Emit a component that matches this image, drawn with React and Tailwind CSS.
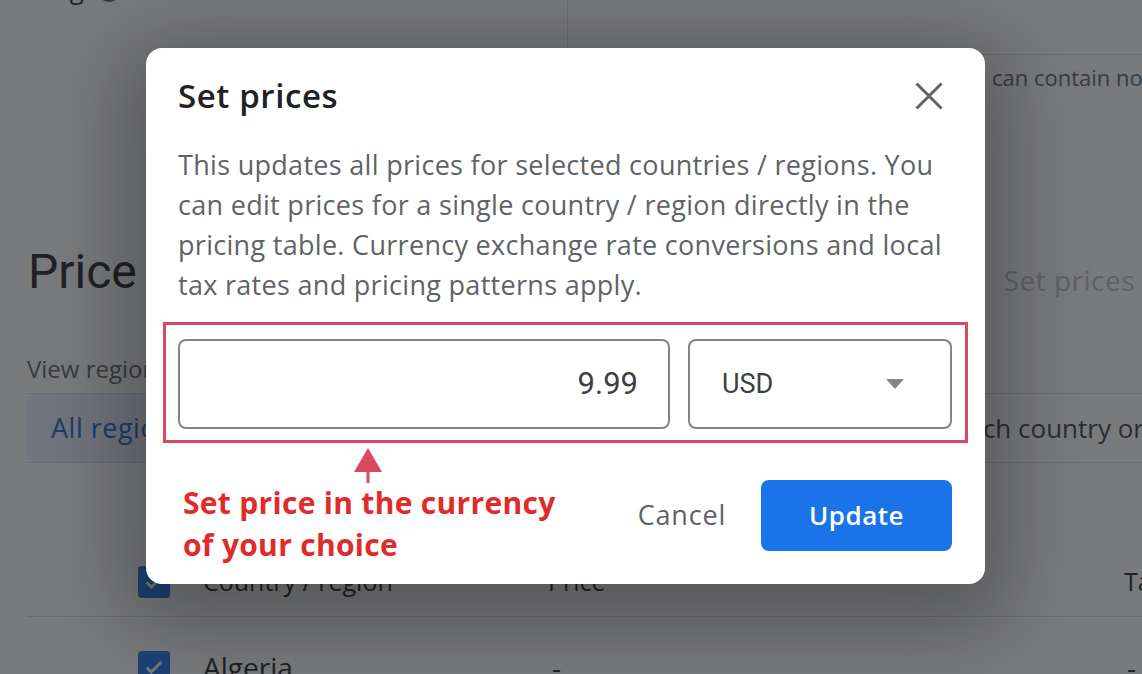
import { Info } from 'lucide-react'

function CheckBox() {
  return (
    <div className="shrink-0 w-[32px] h-[32px] rounded-[4px] bg-[#1a73e8] flex items-center justify-center">
      <svg width="22" height="22" viewBox="0 0 24 24" fill="none">
        <path d="M4 12.5l5 5L20 6.5" stroke="#ffffff" strokeWidth="3" />
      </svg>
    </div>
  )
}

function PricingPage() {
  return (
    <div className="text-[#202124]">
      <div className="flex">
        <div className="shrink-0 w-[568px] h-[120px] border-r border-[#dadce0] pl-[2px]">
          <div className="-mt-[30px] flex items-center gap-3 text-[26px] text-[#202124]">
            Pricing
            <Info className="w-[26px] h-[26px] text-[#5f6368]" />
          </div>
        </div>
        <div className="flex-1 min-w-0">
          <div className="h-[55px] border-b border-[#dadce0]" />
          <p className="pl-[424px] pt-[8px] text-[22px] leading-[28px] text-[#5f6368] whitespace-nowrap">
            can contain no more than two decimals
          </p>
        </div>
      </div>

      <div className="mt-[124px] h-[56px] flex items-start justify-between pl-[28px] pr-[7px]">
        <h1 className="font-['Roboto',sans-serif] text-[48px] leading-[56px] font-normal">Price</h1>
        <span className="mt-[16px] text-[28px] leading-[40px] tracking-[0.5px] text-[#bdc1c6]">Set prices</span>
      </div>

      <p className="mt-[55px] pl-[27px] text-[24px] leading-[28px] text-[#5f6368] whitespace-nowrap">
        View regions
      </p>

      <div className="mt-[10px] ml-[27px] h-[70px] flex border-y border-[#dadce0]">
        <div className="shrink-0 w-[420px] bg-[#e8f0fe] rounded-l-[8px] flex items-center pl-[24px] text-[27px] tracking-[0.5px] font-medium text-[#1967d2]">
          All regions
        </div>
        <div className="shrink-0 flex items-center pl-[507px] text-[26px] font-medium text-[#3c4043] whitespace-nowrap">
          Each country or region
        </div>
      </div>

      <div className="mt-[84px] ml-[26px]">
        <div className="h-[70px] flex items-center pl-[112px] border-b border-[#dadce0] text-[25px] font-medium whitespace-nowrap">
          <CheckBox />
          <span className="shrink-0 ml-[33px] w-[345px]">Country / region</span>
          <span className="shrink-0 w-[576px]">Price</span>
          <span className="shrink-0">Tax</span>
        </div>
        <div className="h-[100px] flex items-center pl-[112px] text-[28px] whitespace-nowrap">
          <CheckBox />
          <span className="shrink-0 ml-[33px] w-[349px]">Algeria</span>
          <span className="shrink-0 w-[575px]">-</span>
          <span className="shrink-0">-</span>
        </div>
      </div>
    </div>
  )
}

function SetPricesDialog() {
  return (
    <div className="absolute left-[146px] top-[48px] w-[839px] h-[536px] rounded-[16px] bg-white pl-[32px] pr-[33px] pt-[28px] shadow-[0_20px_80px_24px_rgba(0,0,0,0.28)]">
      <div className="h-[40px] flex items-center justify-between">
        <h2 className="text-[33px] leading-[40px] tracking-[0.6px] font-semibold text-[#202124]">Set prices</h2>
        <svg width="28" height="28" viewBox="0 0 28 28" className="mr-[9px]">
          <path d="M1.5 1.5L26.5 26.5M26.5 1.5L1.5 26.5" stroke="#5f6368" strokeWidth="3" />
        </svg>
      </div>

      <p className="mt-[29px] text-[27px] leading-[40px] tracking-[0.3px] text-[#5f6368] whitespace-nowrap">
        This updates all prices for selected countries / regions. You
        <br />
        can edit prices for a single country / region directly in the
        <br />
        pricing table. Currency exchange rate conversions and local
        <br />
        tax rates and pricing patterns apply.
      </p>

      <div className="mt-[17px] -ml-[15px] -mr-[16px] border-[3px] border-[#d9485f] pt-[14px] pb-[11px] pl-[12px] pr-[13px] flex gap-[18px] font-['Roboto',sans-serif]">
        <div className="w-[492px] h-[90px] border-2 border-[#80868b] rounded-[8px] flex items-center justify-end pr-[30px] text-[31px] text-[#3c4043]">
          9.99
        </div>
        <div className="flex-1 h-[90px] border-2 border-[#80868b] rounded-[8px] flex items-center justify-between pl-[32px] pr-[46px] text-[27px] text-[#3c4043]">
          USD
          <svg width="18" height="10" viewBox="0 0 18 10">
            <path d="M0 0h18L9 10z" fill="#80868b" />
          </svg>
        </div>
      </div>

      <div className="flex items-start justify-between">
        <div>
          <svg width="28" height="35" viewBox="0 0 28 35" className="ml-[176px] mt-[5px]">
            <path d="M14 0L28 24H0z" fill="#d9485f" />
            <rect x="12.5" y="23" width="3" height="12" fill="#d9485f" />
          </svg>
          <p className="-mt-[1px] ml-[5px] text-[30px] leading-[42px] tracking-[0.3px] font-bold text-[#e02b2b] whitespace-nowrap">
            Set price in the currency
            <br />
            of your choice
          </p>
        </div>
        <div className="mt-[37px] flex items-center">
          <button className="mr-[35px] text-[27px] tracking-[0.8px] text-[#5f6368] font-medium">Cancel</button>
          <button className="w-[191px] h-[71px] rounded-[8px] bg-[#1a73e8] text-[26px] tracking-[0.5px] font-semibold text-white">
            Update
          </button>
        </div>
      </div>
    </div>
  )
}

export default function App() {
  return (
    <div className="relative w-[1142px] h-[674px] overflow-hidden bg-white font-['Open_Sans',sans-serif]">
      <PricingPage />
      <div className="absolute inset-0 bg-[rgba(32,33,36,0.6)]" />
      <SetPricesDialog />
    </div>
  )
}
